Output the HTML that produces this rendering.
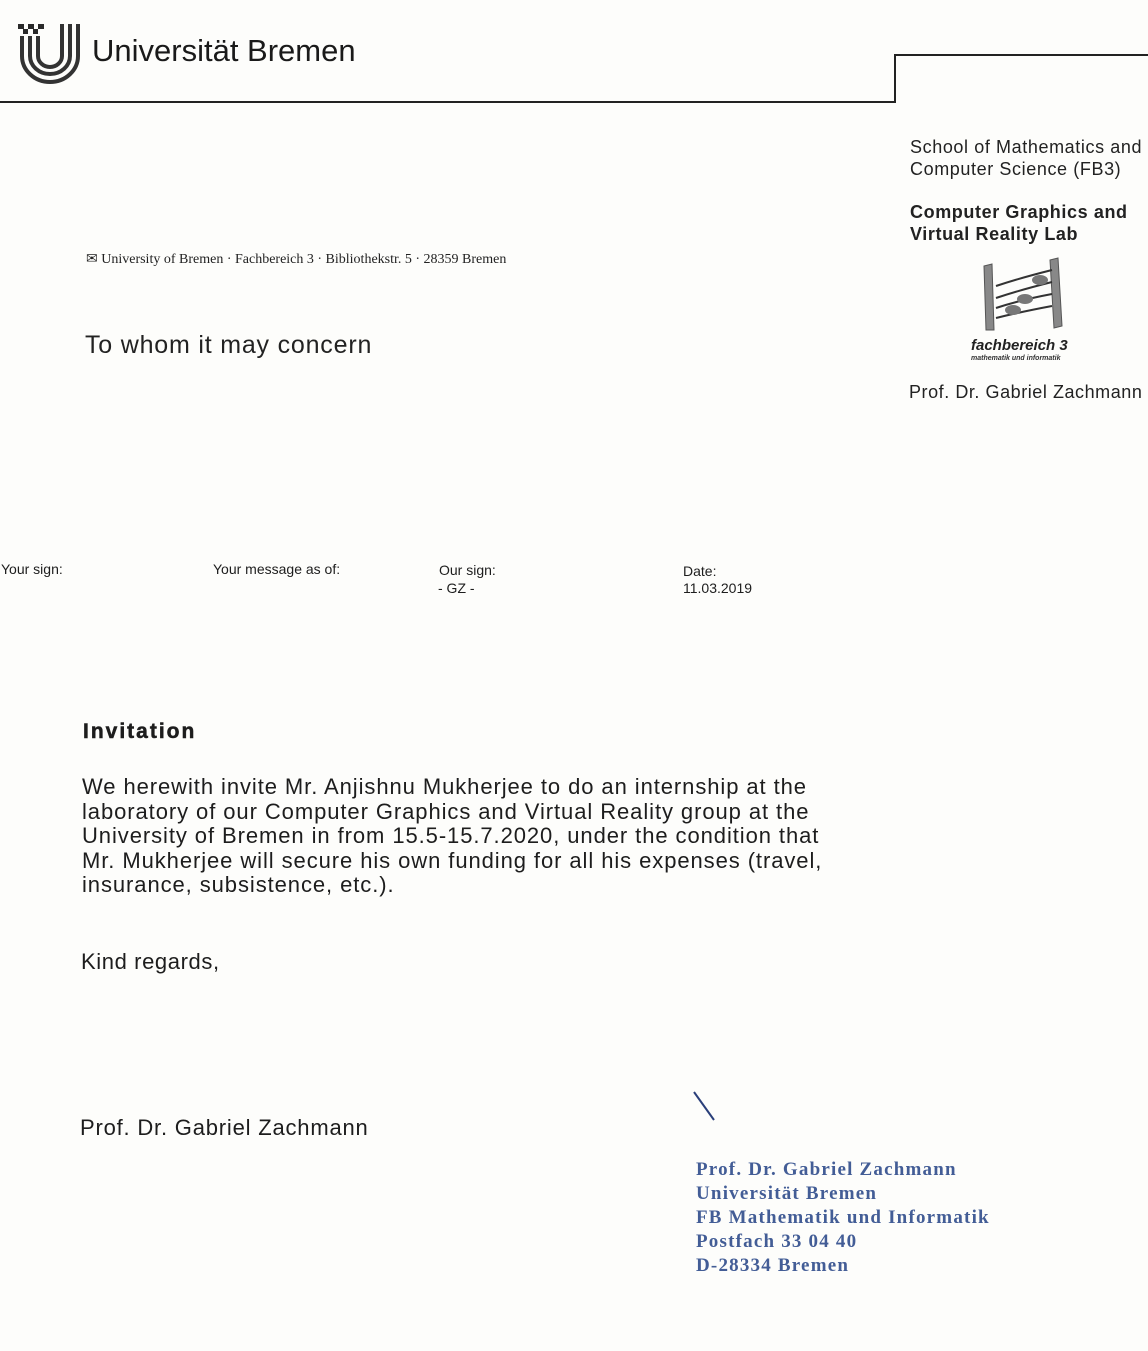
<!DOCTYPE html>
<html><head><meta charset="utf-8">
<style>
html,body{margin:0;padding:0;background:#fdfdfb;}
body{width:1148px;height:1351px;position:relative;overflow:hidden;font-family:"Liberation Sans",sans-serif;color:#1d1d1d;}
.a{position:absolute;white-space:nowrap;}
.serif{font-family:"Liberation Serif",serif;}
</style></head><body>
<svg class="a" style="left:14px;top:20px" width="72" height="64" viewBox="0 0 72 64">
 <g fill="#2a2a2a">
  <rect x="4" y="4" width="6" height="5"/><rect x="14" y="4" width="6" height="5"/><rect x="24" y="4" width="6" height="5"/>
  <rect x="9" y="9" width="5" height="5"/><rect x="19" y="9" width="5" height="5"/>
 </g>
 <g fill="none" stroke="#333" stroke-width="4">
  <path d="M8 16 V36 A28 26 0 0 0 64 36 V4"/>
  <path d="M16 16 V36 A20 18 0 0 0 56 36 V4"/>
  <path d="M24 16 V36 A12 11 0 0 0 48 36 V4"/>
 </g>
</svg>
<div class="a" style="left:92px;top:33px;font-size:31px;color:#1a1a1a;">Universität Bremen</div>
<div class="a" style="left:0;top:101px;width:896px;height:2px;background:#222"></div>
<div class="a" style="left:894px;top:54px;width:2px;height:49px;background:#222"></div>
<div class="a" style="left:894px;top:54px;width:254px;height:2px;background:#222"></div>

<div class="a" style="left:910px;top:136px;font-size:18px;line-height:22px;color:#222;letter-spacing:0.6px">School of Mathematics and<br>Computer Science (FB3)</div>
<div class="a" style="left:910px;top:201px;font-size:18px;line-height:22px;font-weight:bold;color:#222;letter-spacing:0.6px">Computer Graphics and<br>Virtual Reality Lab</div>
<svg class="a" style="left:980px;top:256px" width="90" height="78" viewBox="0 0 90 78">
 <path d="M4 10 L12 8 L14 74 L6 74Z" fill="#888" stroke="#555"/>
 <path d="M70 4 L78 2 L82 70 L74 72Z" fill="#888" stroke="#555"/>
 <g stroke="#333" stroke-width="2" fill="none">
  <path d="M16 30 Q40 22 72 14"/><path d="M16 42 Q40 34 72 26"/><path d="M16 52 Q40 44 72 38"/><path d="M16 62 Q40 56 72 50"/>
 </g>
 <g fill="#777"><ellipse cx="60" cy="24" rx="8" ry="5"/><ellipse cx="45" cy="43" rx="8" ry="5"/><ellipse cx="33" cy="54" rx="8" ry="5"/></g>
</svg>
<div class="a" style="left:971px;top:337px;font-size:15px;font-weight:bold;font-style:italic;color:#222">fachbereich 3</div>
<div class="a" style="left:971px;top:355px;font-size:7px;font-weight:bold;font-style:italic;color:#333">mathematik und informatik</div>
<div class="a" style="left:909px;top:382px;font-size:18px;color:#222;letter-spacing:0.55px">Prof. Dr. Gabriel Zachmann</div>

<div class="a serif" style="left:86px;top:251px;font-size:14px;color:#222">&#9993; University of Bremen · Fachbereich 3 · Bibliothekstr. 5 · 28359 Bremen</div>
<div class="a" style="left:85px;top:331px;font-size:25px;color:#222;letter-spacing:0.8px">To whom it may concern</div>

<div class="a" style="left:1px;top:561px;font-size:14px">Your sign:</div>
<div class="a" style="left:213px;top:561px;font-size:14px">Your message as of:</div>
<div class="a" style="left:439px;top:562px;font-size:14px">Our sign:</div>
<div class="a" style="left:438px;top:580px;font-size:14px">- GZ -</div>
<div class="a" style="left:683px;top:563px;font-size:14px">Date:</div>
<div class="a" style="left:683px;top:580px;font-size:14px">11.03.2019</div>

<div class="a" style="left:83px;top:720px;font-size:21px;font-weight:900;letter-spacing:2px;-webkit-text-stroke:0.5px #1d1d1d">Invitation</div>
<div class="a" style="left:82px;top:775px;font-size:22px;line-height:24.5px;color:#1d1d1d;letter-spacing:0.92px">We herewith invite Mr. Anjishnu Mukherjee to do an internship at the<br>laboratory of our Computer Graphics and Virtual Reality group at the<br>University of Bremen in from 15.5-15.7.2020, under the condition that<br>Mr. Mukherjee will secure his own funding for all his expenses (travel,<br>insurance, subsistence, etc.).</div>
<div class="a" style="left:81px;top:949px;font-size:22px;letter-spacing:0.6px">Kind regards,</div>
<div class="a" style="left:80px;top:1115px;font-size:22px;letter-spacing:0.8px">Prof. Dr. Gabriel Zachmann</div>
<svg class="a" style="left:690px;top:1090px" width="30" height="34"><path d="M4 2 L24 30" stroke="#2a3f7a" stroke-width="2"/></svg>

<div class="a serif" style="left:696px;top:1158px;font-size:19px;line-height:24px;font-weight:bold;color:#2f4c8c;opacity:0.9;letter-spacing:1.2px">Prof. Dr. Gabriel Zachmann<br>Universität Bremen<br>FB Mathematik und Informatik<br>Postfach 33 04 40<br>D-28334 Bremen</div>
</body></html>
